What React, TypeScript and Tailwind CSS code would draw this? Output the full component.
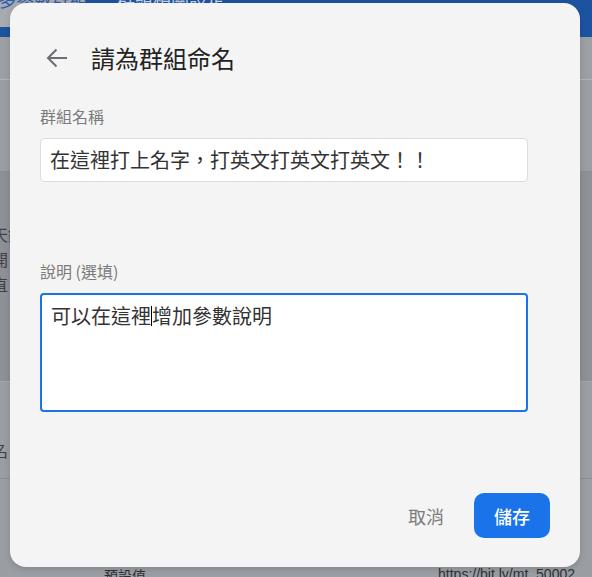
import React from "react";

const cjk = { fontFamily: '"Noto Sans CJK TC", "Noto Sans", sans-serif' };

function ArrowBack() {
  return (
    <svg width="22" height="20" viewBox="0 0 22 20" fill="none" stroke="#6b6e72" strokeWidth="2" strokeLinecap="butt" strokeLinejoin="miter">
      <path d="M21 10H2.5" />
      <path d="M10.5 1.5L2 10l8.5 8.5" />
    </svg>
  );
}

export default function App() {
  return (
    <div className="relative w-[592px] h-[577px] overflow-hidden bg-[#9a9da2]" style={cjk}>
      {/* background page (dimmed) */}
      <div className="flex flex-col w-full h-full">
        <div className="h-[37px] bg-[#1c53a0] flex items-start">
          <div className="w-[86px] h-[27px] bg-[#a7aaaf] overflow-hidden">
            <div className="text-[18px] leading-[20px] text-[#2a5cb0] mt-[-11px] ml-[-2px] whitespace-nowrap">多參數群組</div>
          </div>
          <div className="ml-[31px] h-[10px] overflow-hidden">
            <div className="text-[18px] leading-[20px] text-[#c9d4e6] mt-[-12px] whitespace-nowrap">群組相關設定</div>
          </div>
        </div>
        <div className="h-[43px] bg-[#9c9fa4] border-b border-[#b0b3b7]" />
        <div className="h-[92px] border-b border-[#8a8d92]" />
        <div className="h-[210px] bg-[#8d9095] border-b border-[#a3a6aa] flex flex-col pt-[50px] pl-0">
          <div className="ml-[-8px] text-[16px] leading-[25px] text-[#3e4044]">
            <div>天錢</div>
            <div>開</div>
            <div>直</div>
          </div>
        </div>
        <div className="h-[97px] border-b border-[#8a8d92] flex items-center">
          <div className="ml-[-8px] mt-[40px] text-[16px] text-[#3e4044]">名</div>
        </div>
        <div className="flex-1 flex items-end justify-between pb-[0px]">
          <div className="ml-[104px] mb-[-8px] text-[14px] leading-[20px] text-[#2e3034] underline">預設值</div>
          <div className="mr-[17px] mb-[-7px] text-[14px] leading-[20px] text-[#2e3034]" style={{ fontFamily: '"Liberation Sans", sans-serif' }}>https://bit.ly/mt, 50002</div>
        </div>
      </div>

      {/* dialog */}
      <div className="absolute left-[10px] top-[3px] w-[570px] h-[564px] bg-[#f4f4f4] rounded-[16px] shadow-[0_2px_6px_rgba(0,0,0,0.15)] flex flex-col">
        <div className="mt-[35px] h-[40px] flex items-center">
          <div className="ml-[36px] w-[22px] h-[20px] flex">
            <ArrowBack />
          </div>
          <div className="ml-[23px] text-[24px] leading-[32px] text-[#222222]">請為群組命名</div>
        </div>

        <div className="ml-[30px] mt-[26px] text-[16px] leading-[24px] text-[#7b7b7b]">群組名稱</div>
        <div className="ml-[30px] mt-[10px] w-[488px] h-[44px] bg-white border border-[#dcdcdc] rounded-[4px] flex items-center pl-[9px]">
          <span className="text-[20px] leading-[24px] text-[#333333] whitespace-nowrap">在這裡打上名字，打英文打英文打英文！！</span>
        </div>

        <div className="ml-[30px] mt-[77px] text-[16px] leading-[24px] text-[#7b7b7b]">說明 (選填)</div>
        <div className="ml-[30px] mt-[10px] w-[488px] h-[119px] bg-white border-2 border-[#1a73e8] rounded-[4px] pt-[9px] pl-[9px]">
          <div className="flex items-center text-[20px] leading-[24px] text-[#333333] whitespace-nowrap">
            <span>可以在這裡</span>
            <span className="inline-block w-px h-[20px] bg-black" />
            <span>增加參數說明</span>
          </div>
        </div>

        <div className="mt-auto mb-[29px] mr-[30px] flex items-center justify-end gap-[30px]">
          <span className="text-[18px] leading-[24px] text-[#7b7b7b]">取消</span>
          <div className="w-[76px] h-[45px] rounded-[10px] bg-[#1a73e8] flex items-center justify-center">
            <span className="text-[18px] leading-[24px] text-white font-medium">儲存</span>
          </div>
        </div>
      </div>
    </div>
  );
}
